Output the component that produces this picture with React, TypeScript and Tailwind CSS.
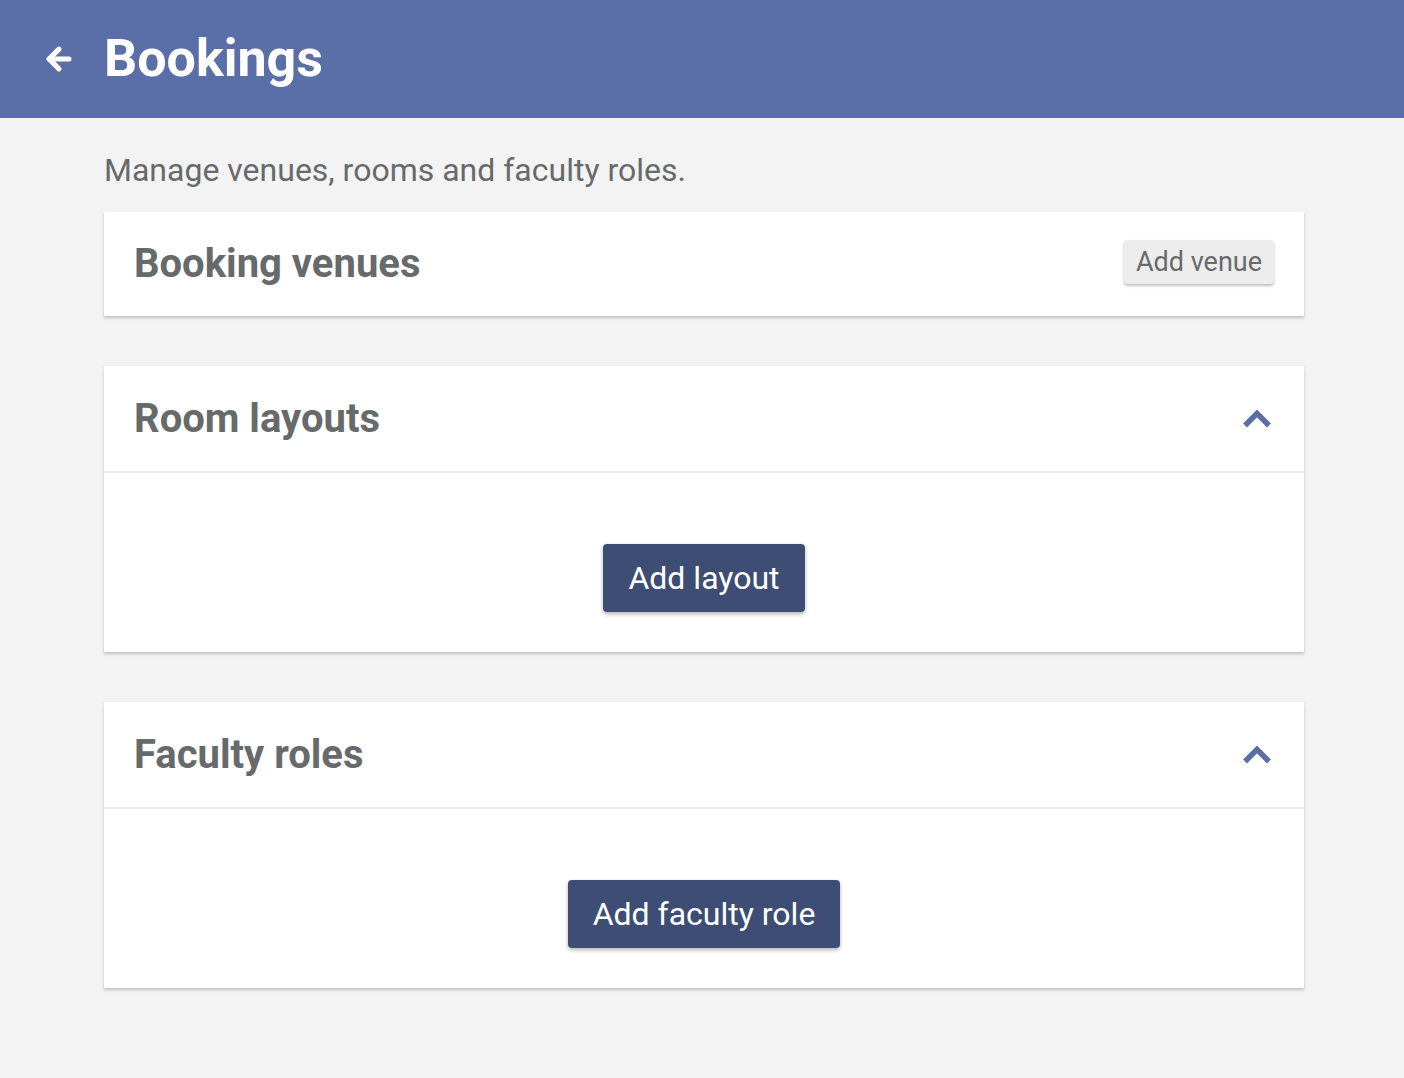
import { ArrowLeft } from "lucide-react";

function Chevron() {
  return (
    <svg width="32" height="22" viewBox="0 0 32 22" className="text-[#5a6fa8]">
      <path d="M4 17.5 L16 5.5 L28 17.5" fill="none" stroke="currentColor" strokeWidth="5.5" strokeLinejoin="miter" />
    </svg>
  );
}

function Section({ title, action }: { title: string; action: string }) {
  return (
    <div className="bg-white shadow-[0_2px_3px_rgba(0,0,0,0.22)]">
      <div className="flex items-center justify-between h-[107px] pl-[30px] pr-[31px] border-b-2 border-[#ececec]">
        <h2 className="text-[40px] font-bold text-[#666a6a]">{title}</h2>
        <Chevron />
      </div>
      <div className="flex justify-center pt-[71px] pb-[40px]">
        <button className="h-[68px] px-[25px] rounded bg-[#3d4d74] text-white text-[32px] shadow-[0_2px_4px_rgba(0,0,0,0.3)]">
          {action}
        </button>
      </div>
    </div>
  );
}

export default function App() {
  return (
    <div className="min-h-screen bg-[#f3f3f3]" style={{ fontFamily: "Roboto, 'Liberation Sans', sans-serif" }}>
      <header className="h-[118px] bg-[#5a6fa8] flex items-center pl-[42px]">
        <ArrowLeft className="w-[34px] h-[34px] text-white" strokeWidth={3.6} />
        <h1 className="ml-[28px] text-[52px] font-bold text-white">Bookings</h1>
      </header>
      <main className="w-[1200px] ml-[104px] pt-[30px] pb-[90px]">
        <p className="text-[32px] text-[#666a6a] leading-[44px]">Manage venues, rooms and faculty roles.</p>
        <div className="mt-[20px] bg-white h-[104px] flex items-center justify-between pl-[30px] pr-[30px] shadow-[0_2px_3px_rgba(0,0,0,0.22)]">
          <h2 className="text-[40px] font-bold text-[#666a6a]">Booking venues</h2>
          <button className="mb-[4px] h-[44px] px-[12px] rounded bg-[#ececec] text-[#666a6a] text-[27px] shadow-[0_2px_3px_rgba(0,0,0,0.25)]">
            Add venue
          </button>
        </div>
        <div className="mt-[50px] flex flex-col gap-[50px]">
          <Section title="Room layouts" action="Add layout" />
          <Section title="Faculty roles" action="Add faculty role" />
        </div>
      </main>
    </div>
  );
}
